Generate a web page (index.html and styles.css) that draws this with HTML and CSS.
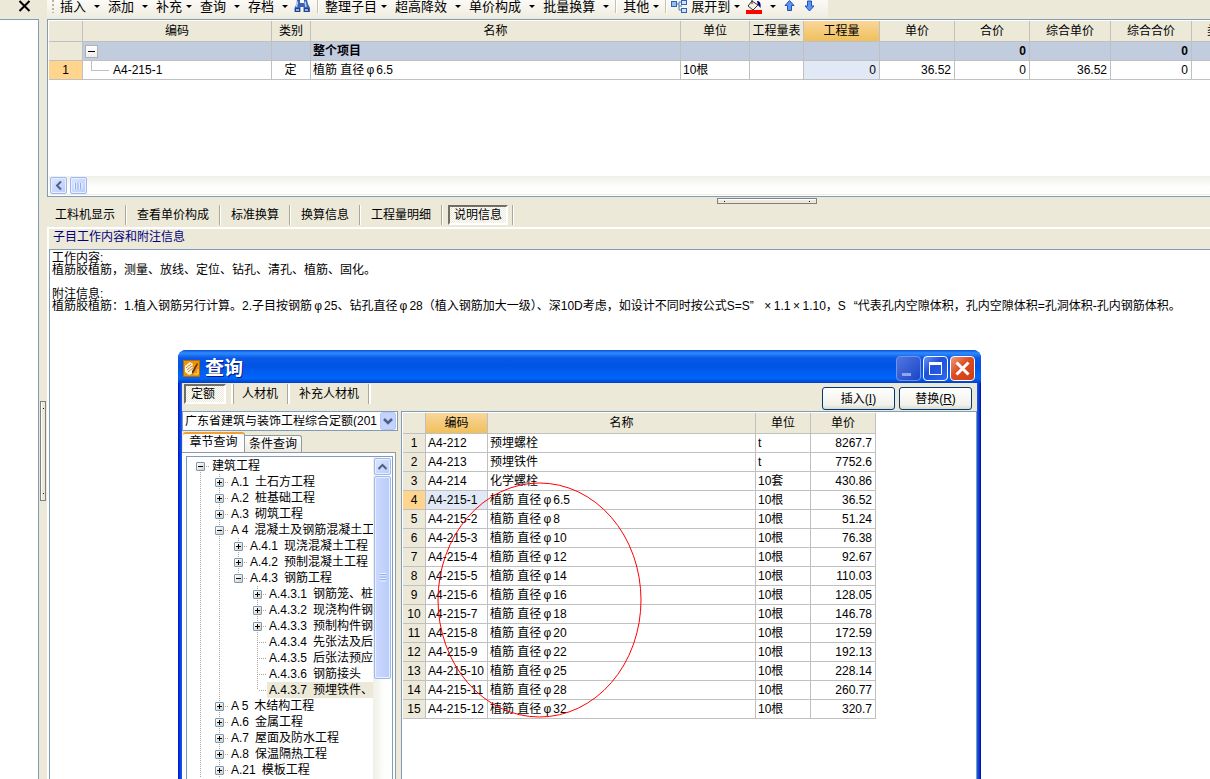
FILE: index.html
```html
<!DOCTYPE html>
<html lang="zh-CN">
<head>
<meta charset="utf-8">
<title>查询</title>
<link rel="stylesheet" href="styles.css">
</head>
<body>
<div class="app">
  <div class="corner">
    <button class="plain" aria-label="关闭"><svg width="13" height="12" viewBox="0 0 13 12"><path d="M1.500 1L11.500 11M11.500 1L1.500 11" stroke="#000" stroke-width="2" fill="none"/></svg></button>
  </div>
  <header class="toolbar">
    <div class="tools">
      <span class="grip"></span>
      <button class="tool">插入<i class="arrow"></i></button>
      <button class="tool">添加<i class="arrow"></i></button>
      <button class="tool near">补充<i class="arrow"></i></button>
      <button class="tool">查询<i class="arrow"></i></button>
      <button class="tool snug">存档<i class="arrow"></i></button>
      <button class="tool icon-only" aria-label="查找"><svg width="16" height="13" viewBox="0 0 16 13"><path d="M3 0h3v3h4V0h3l1 4 2 4v4H9.500V7h-3v5H.5V8l2-4z" fill="#3a62b4"/><path d="M3.500 1.500L2.500 7M11 1.500l1 5.500" stroke="#b7d0f5" stroke-width="1.500"/><path d="M1.500 8.500h4v3h-4zM10.500 8.500h4v3h-4z" fill="#8fb3ea" stroke="#1f3f86"/></svg></button>
      <span class="rule"></span>
      <button class="tool near">整理子目<i class="arrow"></i></button>
      <button class="tool">超高降效<i class="arrow"></i></button>
      <button class="tool">单价构成<i class="arrow"></i></button>
      <button class="tool">批量换算<i class="arrow"></i></button>
      <span class="rule"></span>
      <button class="tool near">其他<i class="arrow"></i></button>
      <span class="rule tight"></span>
      <button class="tool near snug"><svg class="lead" width="16" height="14" viewBox="0 0 16 14"><path d="M5 4h3v-2h3M8 4v6h3M8 6h3" stroke="#5577a8" fill="none"/><rect x=".5" y="1.500" width="5" height="5" fill="#8fc0f5" stroke="#2f62b5"/><rect x="10.500" y=".5" width="5" height="4" fill="#cfe3ff" stroke="#2f62b5"/><rect x="10.500" y="8.500" width="5" height="4" fill="#cfe3ff" stroke="#2f62b5"/></svg>展开到<i class="arrow"></i></button>
      <button class="tool" aria-label="填充颜色"><svg width="16" height="14" viewBox="0 0 16 14"><path d="M6 1l6 4-5 5-5-4z" fill="#f4f1e2" stroke="#333"/><path d="M6 0v4" stroke="#333"/><path d="M11 1c3 0 4 2 3.500 7L12 5z" fill="#00007c"/><path d="M0 10h16v4H0z" fill="#f00"/></svg><i class="arrow"></i></button>
      <button class="tool icon-only" aria-label="上移"><svg width="11" height="12" viewBox="0 0 11 12"><path d="M5.500.5l4.500 5H7.500v5h-4v-5H1z" fill="#5b95f5" stroke="#2452b5"/></svg></button>
      <button class="tool icon-only" aria-label="下移"><svg width="11" height="12" viewBox="0 0 11 12"><path d="M5.500 11L10 6H7.500V1h-4v5H1z" fill="#5b95f5" stroke="#2452b5"/></svg></button>
    </div>
  </header>

  <aside class="dock">
    <div class="dock-pane"></div>
    <div class="splitter-v"></div>
  </aside>

  <main class="main">
    <section class="sheet">
      <table class="grid budget">
        <colgroup><col class="w34"><col class="w189"><col class="w39"><col class="w370"><col class="w69"><col class="w54"><col class="w76"><col class="w75"><col class="w75"><col class="w81"><col class="w81"><col class="w81"></colgroup>
        <thead><tr><th></th><th>编码</th><th>类别</th><th>名称</th><th>单位</th><th>工程量表</th><th class="hot">工程量</th><th>单价</th><th>合价</th><th>综合单价</th><th>综合合价</th><th class="cut">类别</th></tr></thead>
        <tbody>
          <tr class="total"><th></th><td class="root"><button class="fold" aria-label="折叠"></button></td><td></td><td>整个项目</td><td></td><td></td><td></td><td></td><td class="num">0</td><td></td><td class="num">0</td><td></td></tr>
          <tr><th class="on">1</th><td class="branch"><span>A4-215-1</span></td><td class="mid">定</td><td>植筋 直径<span class="phi">φ</span>6.5</td><td>10根</td><td></td><td class="num cell-on">0</td><td class="num">36.52</td><td class="num">0</td><td class="num">36.52</td><td class="num">0</td><td></td></tr>
        </tbody>
      </table>
      <div class="hscroll">
        <button class="sb" aria-label="向左"><svg width="8" height="9" viewBox="0 0 8 9"><path d="M6 .5L2 4.500l4 4" stroke="#4d6185" stroke-width="2" fill="none"/></svg></button>
        <button class="sb" aria-label="滚动条"><svg width="9" height="8" viewBox="0 0 9 8"><path d="M.5 1v6M3 1v6M5.500 1v6M8 1v6" stroke="#eef4fe"/><path d="M1.500 1v6M4 1v6M6.500 1v6" stroke="#8cb0f8"/></svg></button>
      </div>
    </section>

    <div class="splitter-h"></div>
    <nav class="tabs">
      <button class="tab">工料机显示</button><button class="tab">查看单价构成</button><button class="tab">标准换算</button><button class="tab">换算信息</button><button class="tab">工程量明细</button><button class="tab active">说明信息</button><span class="tab-end"></span>
    </nav>

    <section class="info">
      <h2>子目工作内容和附注信息</h2>
      <div class="note">
        <p>工作内容:</p>
        <p>植筋胶植筋，测量、放线、定位、钻孔、清孔、植筋、固化。</p>
        <p>&nbsp;</p>
        <p>附注信息:</p>
        <p>植筋胶植筋：1.植入钢筋另行计算。2.子目按钢筋<span class="phi">φ</span>25、钻孔直径<span class="phi">φ</span>28（植入钢筋加大一级）、深10D考虑，如设计不同时按公式S=S<span class="wide quote">”</span><span class="wide">×</span>1.1<span class="wide">×</span>1.10，S<span class="wide end">“</span>代表孔内空隙体积，孔内空隙体积=孔洞体积-孔内钢筋体积。</p>
      </div>
    </section>
  </main>
</div>

<div class="dialog" role="dialog" aria-labelledby="dlg">
  <div class="titlebar">
    <svg width="17" height="17" viewBox="0 0 17 17"><rect x=".5" y=".5" width="16" height="16" fill="#e9950c" stroke="#b86a00"/><path d="M2 6l5-4 3 2-1 3 2 1-1 5-4 2-4-3z" fill="#fff6dc"/><path d="M3 8l5-4M4 10l5-4M5 12l5-4" stroke="#a86412" stroke-width=".8"/><path d="M9 11l5-8 1 1-4 8-2 2z" fill="#6d3200"/><path d="M11 14h4v-5" stroke="#ffe27a" fill="none"/></svg>
    <h1 id="dlg">查询</h1>
    <button class="win dim" aria-label="最小化"><svg width="21" height="21" viewBox="0 0 21 21"><path d="M4 15h9v3H4z" fill="#8fa6ea"/></svg></button>
    <button class="win" aria-label="最大化"><svg width="21" height="21" viewBox="0 0 21 21"><path d="M4.500 5.500h12v11h-12zM4 6.500h13" stroke="#fff" fill="none"/><path d="M4 4h13v3H4z" fill="#fff"/></svg></button>
    <button class="win red" aria-label="关闭"><svg width="21" height="21" viewBox="0 0 21 21"><path d="M4.500 4.500l12 12M16.500 4.500l-12 12" stroke="#fff" stroke-width="3"/></svg></button>
  </div>
  <div class="client">
    <div class="actions">
      <nav class="tabs">
        <button class="tab active">定额</button><button class="tab">人材机</button><button class="tab">补充人材机</button>
      </nav>
      <button class="push">插入(<u>I</u>)</button>
      <button class="push">替换(<u>R</u>)</button>
    </div>
    <div class="panes">
      <div class="left">
        <div class="combo">
          <select aria-label="定额库"><option>广东省建筑与装饰工程综合定额(201</option></select>
          <svg width="16" height="18" viewBox="0 0 16 18"><rect x=".5" y=".5" width="15" height="17" rx="2" fill="#c3d3fd" stroke="#b3c6f5"/><path d="M4 7l4 4 4-4" stroke="#4d6185" stroke-width="2.500" fill="none"/></svg>
        </div>
        <div class="sheets"><button class="leaf front">章节查询</button><button class="leaf">条件查询</button></div>
        <div class="page">
          <div class="treebox">
            <ul class="tree">
              <li><div class="row"><button class="tw open" aria-label="折叠"></button><span class="label">建筑工程</span></div>
                <ul class="more">
                  <li><div class="row"><button class="tw" aria-label="展开"></button><span class="label"><b>A.1</b>土石方工程</span></div></li>
                  <li><div class="row"><button class="tw" aria-label="展开"></button><span class="label"><b>A.2</b>桩基础工程</span></div></li>
                  <li><div class="row"><button class="tw" aria-label="展开"></button><span class="label"><b>A.3</b>砌筑工程</span></div></li>
                  <li><div class="row"><button class="tw open" aria-label="折叠"></button><span class="label"><b>A 4</b>混凝土及钢筋混凝土工</span></div>
                    <ul>
                      <li><div class="row"><button class="tw" aria-label="展开"></button><span class="label"><b>A.4.1</b>现浇混凝土工程</span></div></li>
                      <li><div class="row"><button class="tw" aria-label="展开"></button><span class="label"><b>A.4.2</b>预制混凝土工程</span></div></li>
                      <li><div class="row"><button class="tw open" aria-label="折叠"></button><span class="label"><b>A.4.3</b>钢筋工程</span></div>
                        <ul>
                          <li><div class="row"><button class="tw" aria-label="展开"></button><span class="label"><b>A.4.3.1</b>钢筋笼、桩</span></div></li>
                          <li><div class="row"><button class="tw" aria-label="展开"></button><span class="label"><b>A.4.3.2</b>现浇构件钢</span></div></li>
                          <li><div class="row"><button class="tw" aria-label="展开"></button><span class="label"><b>A.4.3.3</b>预制构件钢</span></div></li>
                          <li><div class="row end"><span class="label"><b>A.4.3.4</b>先张法及后</span></div></li>
                          <li><div class="row end"><span class="label"><b>A.4.3.5</b>后张法预应</span></div></li>
                          <li><div class="row end"><span class="label"><b>A.4.3.6</b>钢筋接头</span></div></li>
                          <li><div class="row end"><span class="label picked"><b>A.4.3.7</b>预埋铁件、</span></div></li>
                        </ul></li>
                    </ul></li>
                  <li><div class="row"><button class="tw" aria-label="展开"></button><span class="label"><b>A 5</b>木结构工程</span></div></li>
                  <li><div class="row"><button class="tw" aria-label="展开"></button><span class="label"><b>A.6</b>金属工程</span></div></li>
                  <li><div class="row"><button class="tw" aria-label="展开"></button><span class="label"><b>A.7</b>屋面及防水工程</span></div></li>
                  <li><div class="row"><button class="tw" aria-label="展开"></button><span class="label"><b>A.8</b>保温隔热工程</span></div></li>
                  <li><div class="row"><button class="tw" aria-label="展开"></button><span class="label"><b>A.21</b>模板工程</span></div></li>
                </ul></li>
            </ul>
            <div class="vscroll">
              <button class="sb" aria-label="向上"><svg width="9" height="8" viewBox="0 0 9 8"><path d="M.5 6l4-4 4 4" stroke="#4d6185" stroke-width="2" fill="none"/></svg></button>
              <button class="sb thumb" aria-label="滚动条"><svg width="8" height="9" viewBox="0 0 8 9"><path d="M1 .5h6M1 3h6M1 5.500h6M1 8h6" stroke="#eef4fe"/><path d="M1 1.500h6M1 4h6M1 6.500h6" stroke="#8cb0f8"/></svg></button>
            </div>
          </div>
        </div>
      </div>
      <div class="right">
        <table class="grid quota">
          <colgroup><col class="w23"><col class="w62"><col class="w268"><col class="w55"><col class="w65"></colgroup>
          <thead><tr><th></th><th class="hot">编码</th><th>名称</th><th>单位</th><th>单价</th></tr></thead>
          <tbody>
            <tr><th>1</th><td>A4-212</td><td>预埋螺栓</td><td>t</td><td class="num">8267.7</td></tr>
            <tr><th>2</th><td>A4-213</td><td>预埋铁件</td><td>t</td><td class="num">7752.6</td></tr>
            <tr><th>3</th><td>A4-214</td><td>化学螺栓</td><td>10套</td><td class="num">430.86</td></tr>
            <tr><th class="on">4</th><td class="cell-on">A4-215-1</td><td>植筋 直径<span class="phi">φ</span>6.5</td><td>10根</td><td class="num">36.52</td></tr>
            <tr><th>5</th><td>A4-215-2</td><td>植筋 直径<span class="phi">φ</span>8</td><td>10根</td><td class="num">51.24</td></tr>
            <tr><th>6</th><td>A4-215-3</td><td>植筋 直径<span class="phi">φ</span>10</td><td>10根</td><td class="num">76.38</td></tr>
            <tr><th>7</th><td>A4-215-4</td><td>植筋 直径<span class="phi">φ</span>12</td><td>10根</td><td class="num">92.67</td></tr>
            <tr><th>8</th><td>A4-215-5</td><td>植筋 直径<span class="phi">φ</span>14</td><td>10根</td><td class="num">110.03</td></tr>
            <tr><th>9</th><td>A4-215-6</td><td>植筋 直径<span class="phi">φ</span>16</td><td>10根</td><td class="num">128.05</td></tr>
            <tr><th>10</th><td>A4-215-7</td><td>植筋 直径<span class="phi">φ</span>18</td><td>10根</td><td class="num">146.78</td></tr>
            <tr><th>11</th><td>A4-215-8</td><td>植筋 直径<span class="phi">φ</span>20</td><td>10根</td><td class="num">172.59</td></tr>
            <tr><th>12</th><td>A4-215-9</td><td>植筋 直径<span class="phi">φ</span>22</td><td>10根</td><td class="num">192.13</td></tr>
            <tr><th>13</th><td>A4-215-10</td><td>植筋 直径<span class="phi">φ</span>25</td><td>10根</td><td class="num">228.14</td></tr>
            <tr><th>14</th><td>A4-215-11</td><td>植筋 直径<span class="phi">φ</span>28</td><td>10根</td><td class="num">260.77</td></tr>
            <tr><th>15</th><td>A4-215-12</td><td>植筋 直径<span class="phi">φ</span>32</td><td>10根</td><td class="num">320.7</td></tr>
          </tbody>
        </table>
        <svg class="ring" width="205" height="237" viewBox="0 0 205 237"><ellipse cx="102.500" cy="118" rx="101.500" ry="117" fill="none" stroke="#f00"/></svg>
      </div>
    </div>
  </div>
</div>
</body>
</html>
```
FILE: styles.css
```css
* { box-sizing: border-box; }
html, body { height: 100%; }
body {
  margin: 0;
  position: relative;
  overflow: hidden;
  background: #ece9d8;
  color: #000;
  font: 12px/12px "Liberation Sans", "Noto Sans CJK SC", sans-serif;
}
button, select { font: inherit; color: inherit; border: 0; padding: 0; margin: 0; background: none; }
button { white-space: nowrap; }
h1, h2, p, ul { margin: 0; padding: 0; }
svg { display: block; flex: none; }

.app { display: grid; grid-template: 19px 1fr / 47px 1fr; height: 100vh; }
.corner { padding-left: 18px; }

/* toolbar */
.toolbar { overflow: hidden; }
.tools {
  display: inline-flex; align-items: flex-start; height: 18px; padding: 0 4px 0 5px;
  background: linear-gradient(#fbfaf6, #efecdf); font-size: 13px; line-height: 13px;
}
.grip { width: 2px; height: 13px; margin-right: 6px; background: repeating-linear-gradient(#b8b4a2 0 2px, transparent 2px 4px); }
.tool { display: flex; align-items: flex-start; gap: 8px; margin-right: 8px; height: 14px; }
.tool.near { gap: 4px; }
.tool.snug { margin-right: 6px; }
.tool.icon-only { margin-right: 9px; }
.arrow { border: 3px solid transparent; border-top-color: #000; border-bottom: 0; margin-top: 5px; width: 6px; }
.rule { width: 2px; height: 13px; margin: 0 6px 0 -2px; background: #c5c2b2; border-right: 1px solid #fff; }
.rule.tight { margin-right: 4px; }

/* left dock */
.dock { display: grid; grid-template-columns: 39px 8px; }
.dock-pane { background: #fff; border-top: 1px solid #7f9db9; border-right: 1px solid #7f9db9; }
.splitter-v {
  align-self: center; width: 6px; height: 100px; margin: 104px 0 0 1px; border: 1px solid #808080;
  background: linear-gradient(#000080, #000080) 2px 6px / 1px 1px no-repeat, linear-gradient(#000080, #000080) 2px 91px / 1px 1px no-repeat, linear-gradient(90deg, #fff 1px, #ece9d8 1px);
}

/* main column */
.main { display: flex; flex-direction: column; min-width: 0; }
.sheet { display: flex; flex-direction: column; height: 178px; overflow: hidden; background: #fff; border: 1px solid #7f9db9; border-right: 0; padding: 1px 0 1px 1px; }
.grid { table-layout: fixed; border-collapse: separate; border-spacing: 0; white-space: nowrap; }
.budget { width: 1224px; flex: none; }
.quota { width: 473px; }
.grid th, .grid td { height: 19px; padding: 0 3px 0 2px; border-right: 1px solid #c0c0c0; border-bottom: 1px solid #c0c0c0; overflow: hidden; text-align: left; }
.grid th { background: #ece9d8; font-weight: 400; text-align: center; padding: 0; }
.grid thead th { height: 21px; }
.grid thead .hot { background: linear-gradient(#f9d69a, #efc05c); }
.grid thead .cut { text-align: left; padding-left: 15px; }
.grid .on { background: #ffd48c; }
.grid .cell-on { background: #e0e9f5; }
.grid .num { text-align: right; }
.grid .mid { text-align: center; }
.total td { background: #c1cddf; font-weight: 700; }
.w23 { width: 23px; } .w34 { width: 34px; } .w39 { width: 39px; } .w54 { width: 54px; } .w55 { width: 55px; }
.w62 { width: 62px; } .w65 { width: 65px; } .w69 { width: 69px; } .w75 { width: 75px; } .w76 { width: 76px; }
.w81 { width: 81px; } .w189 { width: 189px; } .w268 { width: 268px; } .w370 { width: 370px; }
.fold { display: block; width: 13px; height: 13px; border: 1px solid #b0b0b0; background: linear-gradient(#000, #000) center / 7px 1px no-repeat, linear-gradient(#fff, #ececec); }
.branch span { display: flex; align-items: center; }
.branch span::before { content: ""; width: 17px; height: 10px; margin: -10px 4px 0 6px; border: solid #c0c0c0; border-width: 0 0 1px 1px; }
.phi, .wide { display: inline-block; width: 12px; text-align: center; }
.wide.quote { text-align: left; }
.wide.end { text-align: right; }

.hscroll { display: flex; gap: 3px; height: 19px; margin-top: auto; padding: 1px; background: linear-gradient(#f0efe8, #fefefc 60%); border-bottom: 1px solid #eeede5; }
.sb { display: grid; place-items: center; width: 17px; height: 17px; border: 1px solid #9db8f0; border-radius: 2px; background: linear-gradient(135deg, #dce6fe, #b8cbfa); box-shadow: inset 0 0 0 1px #e8effe; }

.splitter-h {
  flex: none; width: 100px; height: 6px; margin: 1px 0 0 calc(50% + 88px); border: 1px solid #808080;
  background: linear-gradient(#000080, #000080) 6px 2px / 1px 1px no-repeat, linear-gradient(#000080, #000080) 91px 2px / 1px 1px no-repeat, linear-gradient(#fff 1px, #ece9d8 1px);
}
.tabs { display: flex; align-items: center; }
.tab { height: 20px; padding: 0 11px 0 10px; border-right: 2px solid #fff; box-shadow: inset -1px 0 #aca899; }
.main > .tabs { flex: none; padding: 0 0 2px 0; height: 23px; }
.main > .tabs .tab { padding: 0 11px 0 8px; border-right: 1px solid #fff; }
.main > .tabs .tab + .tab { padding-left: 10px; padding-right: 11px; margin-right: 0; }
.tab.active, .main > .tabs .tab.active, .main > .tabs .tab + .tab.active {
  padding: 0 4px 0 4px; margin-left: 5px; box-shadow: none;
  border: 2px solid #fff; border-top-color: #716f64; border-left-color: #716f64;
  background: repeating-conic-gradient(#fff 0 25%, #ece9d8 0 50%) 0 0 / 2px 2px;
}
.tab-end { width: 2px; height: 20px; margin-left: 4px; background: #aca899; border-right: 1px solid #fff; }

.info { flex: 1; display: flex; flex-direction: column; border-top: 2px solid #fff; border-left: 2px solid #fff; }
.info h2 { height: 20px; padding: 2px 0 0 4px; color: #000080; font-size: 12px; font-weight: 400; }
.note { flex: 1; background: #fff; border: 1px solid #7f9db9; border-width: 1px 0 0 1px; padding: 2px; white-space: nowrap; overflow: hidden; }

/* query dialog */
.dialog { position: absolute; left: 178px; top: 350px; bottom: 0; width: 803px; display: flex; flex-direction: column; padding: 0 4px; border-radius: 8px 8px 0 0; background: linear-gradient(90deg, #0013c4, #1660f0 4px, #1660f0 calc(100% - 4px), #0010a8); }
.titlebar { display: flex; align-items: center; gap: 2px; height: 33px; margin: 0 -4px; padding: 4px 6px 0 5px; border-radius: 8px 8px 0 0; background: linear-gradient(#0a4fd0, #2f8cff 3px, #0a58e8 8px, #0054e3 16px, #0066fb 28px, #0040c8); }
.titlebar h1 { flex: 1; padding-left: 3px; color: #fff; font-size: 19px; line-height: 20px; font-weight: 700; text-shadow: 1px 1px #0a1883; }
.win { width: 25px; height: 25px; border: 1px solid #fff; border-radius: 4px; padding: 1px; background: linear-gradient(135deg, #6c95f5, #1e50dc 40%, #2d68f0); }
.win.dim { border-color: #7494ea; background: linear-gradient(135deg, #4f76e0, #1c45c8); }
.win.red { background: linear-gradient(135deg, #f09a7c, #dc4b22 45%, #cf3f12); }
.client { flex: 1; min-height: 0; display: flex; flex-direction: column; background: #ece9d8; }
.actions { display: flex; gap: 4px; height: 28px; padding: 1px 5px 0 2px; align-items: flex-start; }
.actions .tabs { flex: 1; }
.actions .tab { padding: 0 10px 0 9px; }
.actions .tab.active { width: 42px; margin: 0 5px 0 0; padding: 0 5px; text-align: left; }
.actions .tab.active + .tab { border-left: 2px solid #fff; box-shadow: inset 1px 0 #aca899, inset -1px 0 #aca899; }
.push { width: 73px; height: 23px; margin-top: 3px; border: 1px solid #003c74; border-radius: 3px; background: linear-gradient(#fff, #f2f1ea 80%, #dcd8cc); }
.panes { flex: 1; min-height: 0; display: grid; grid-template-columns: 216px 1fr; gap: 3px; }
.left { display: flex; flex-direction: column; min-height: 0; min-width: 0; }
.combo { display: grid; height: 20px; flex: none; border: 1px solid #7f9db9; background: #fff; }
.combo > * { grid-area: 1 / 1; }
.combo select { appearance: none; width: 100%; height: 18px; padding: 0 20px 0 2px; border-radius: 0; overflow: hidden; }
.combo svg { justify-self: end; margin-right: 1px; pointer-events: none; }
.sheets { display: flex; align-items: flex-end; height: 21px; flex: none; padding-left: 1px; }
.leaf { height: 17px; width: 57px; border: 1px solid #919b9c; border-width: 1px 1px 0 0; border-radius: 0 3px 0 0; background: linear-gradient(#fff, #ecebe6); }
.leaf.front { height: 20px; width: 62px; border-top: 2px solid #f0a030; border-radius: 3px 3px 0 0; background: #fcfcfe; padding-bottom: 2px; }
.page { flex: 1; min-height: 0; margin-right: 2px; padding: 3px 2px 0 4px; background: #fcfcfe; border: 1px solid #919b9c; border-width: 1px 1px 0 0; display: flex; }
.treebox { flex: 1; min-width: 0; display: grid; grid-template-columns: 1fr 19px; border: 1px solid #7f9db9; border-bottom: 0; background: #fff; }
.tree { overflow: hidden; padding: 1px 0 0 9px; line-height: 16px; }
.tree, .tree ul { list-style: none; position: relative; }
.tree ul { padding-left: 19px; }
.tree li { position: relative; }
.tree li::before { content: ""; position: absolute; top: 0; bottom: 0; left: 4px; width: 1px; background: repeating-linear-gradient(#aca899 0 1px, transparent 1px 2px); }
.tree ul li:last-child::before { bottom: auto; height: 8px; }
.tree .more > li:last-child::before { height: 100%; }
.tree > li::before { top: 8px; }
.row { display: flex; align-items: center; height: 16px; position: relative; }
.row::before { content: ""; order: 1; flex: none; width: 5px; height: 1px; background: repeating-linear-gradient(90deg, transparent 0 1px, #aca899 1px 2px); }
.row.end::before { order: 0; width: 9px; margin-left: 5px; }
.tw { flex: none; width: 9px; height: 9px; border: 1px solid #7898b5; border-radius: 1px; background: linear-gradient(#000, #000) center / 5px 1px no-repeat, linear-gradient(#000, #000) center / 1px 5px no-repeat, linear-gradient(135deg, #fff, #d5cfc2); }
.tw.open { background: linear-gradient(#000, #000) center / 5px 1px no-repeat, linear-gradient(135deg, #fff, #d5cfc2); }
.label { order: 2; display: flex; flex: none; gap: 6px; padding-left: 2px; white-space: nowrap; }
.label b { font-weight: 400; }
.label.picked { background: #ece9d8; padding-right: 20px; }
.vscroll { display: flex; flex-direction: column; gap: 1px; padding: 1px; background: linear-gradient(90deg, #f0efe8, #fefefc 60%); }
.thumb { height: 203px; background: linear-gradient(90deg, #cddafe, #b8cbfa); }

.right { position: relative; background: #fff; border: 1px solid #7f9db9; border-bottom: 0; padding: 1px; overflow: hidden; }
.ring { position: absolute; left: 35px; top: 70px; pointer-events: none; }
```
